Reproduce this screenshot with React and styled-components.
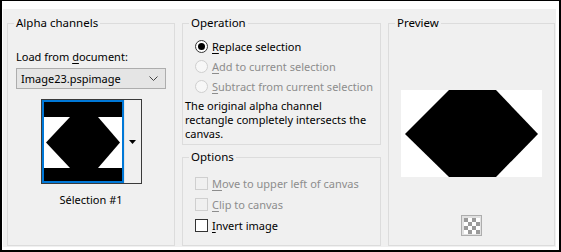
import React from 'react';
import styled, { createGlobalStyle } from 'styled-components';

const GlobalStyle = createGlobalStyle`
  html, body { margin: 0; padding: 0; background: #fff; }
  body {
    font-family: "Noto Sans", "Open Sans", sans-serif;
    font-size: 11px;
    color: #000;
  }
`;

const Frame = styled.div`
  width: 561px;
  height: 252px;
  box-sizing: border-box;
  border: 2px solid #000;
  border-top-width: 1px;
  padding: 8px 3px 3px 1px;
  background: #fff;
`;

const Panel = styled.div`
  height: 100%;
  box-sizing: border-box;
  background: #f0f0f0;
  display: grid;
  grid-template-columns: 168px 199px 167px;
  column-gap: 7px;
  padding: 7px 0 1px 4px;
`;

const Column = styled.div`
  display: flex;
  flex-direction: column;
  gap: 5px;
  min-height: 0;
`;

const Group = styled.fieldset`
  margin: 0;
  padding: 0 8px;
  border: 1px solid #dcdcdc;
  min-width: 0;
  box-sizing: border-box;
  height: ${({ $h }) => ($h ? `${$h}px` : 'auto')};
  flex: ${({ $h }) => ($h ? 'none' : '1')};
`;

const Legend = styled.legend`
  padding: 0 2px;
  margin-left: -2px;
  line-height: 14px;
  font-size: 11.5px;
`;

const Body = styled.div`
  display: flex;
  flex-direction: column;
  align-items: ${({ $center }) => ($center ? 'center' : 'stretch')};
`;

const Label = styled.div`
  line-height: 16px;
  margin-top: ${({ $mt }) => $mt || 0}px;
  white-space: nowrap;
`;

const U = styled.span`
  text-decoration: underline;
  text-underline-offset: 2px;
`;

const Select = styled.div`
  margin-top: 3px;
  width: 150px;
  height: 21px;
  box-sizing: border-box;
  border: 1px solid #adadad;
  background: #e5e5e5;
  display: flex;
  align-items: center;
  justify-content: space-between;
  padding: 0 7px 0 4px;
`;

const Picker = styled.div`
  margin-top: 10px;
  align-self: center;
  width: 101px;
  height: 85px;
  box-sizing: border-box;
  border: 1px solid #3a3a3a;
  background: #fff;
  display: flex;
`;

const Thumb = styled.div`
  width: 82px;
  height: 83px;
  box-sizing: border-box;
  border: 2px solid #0078d7;
  display: flex;
`;

const DropButton = styled.div`
  flex: 1;
  background: #f0f0f0;
  border-left: 1px solid #e3e3e3;
  display: flex;
  align-items: center;
  justify-content: center;
`;

const Caption = styled.div`
  align-self: center;
  margin-top: 8px;
  line-height: 16px;
`;

const OptionRow = styled.div`
  display: flex;
  align-items: center;
  height: ${({ $h }) => $h}px;
  margin-left: 4px;
  color: ${({ $disabled }) => ($disabled ? '#8d8d8d' : '#000')};
  white-space: nowrap;
`;

const RadioCircle = styled.span`
  flex: none;
  width: 13px;
  height: 13px;
  box-sizing: border-box;
  border-radius: 50%;
  border: 1px solid ${({ $disabled }) => ($disabled ? '#cfcfcf' : '#333')};
  background: ${({ $disabled }) => ($disabled ? '#f7f7f7' : '#fff')};
  margin-right: 4px;
  display: flex;
  align-items: center;
  justify-content: center;
  &::after {
    content: '';
    display: ${({ $checked }) => ($checked ? 'block' : 'none')};
    width: 7px;
    height: 7px;
    border-radius: 50%;
    background: #000;
  }
`;

const CheckBox = styled.span`
  flex: none;
  width: 13px;
  height: 13px;
  box-sizing: border-box;
  border: 1px solid ${({ $disabled }) => ($disabled ? '#cfcfcf' : '#333')};
  background: ${({ $disabled }) => ($disabled ? '#f0f0f0' : '#fff')};
  margin-right: 4px;
`;

const Description = styled.div`
  margin: 3px 0 0 -6px;
  line-height: 14px;
  white-space: nowrap;
`;

const CheckList = styled.div`
  margin-top: 9px;
`;

const Canvas = styled.div`
  margin-top: 60px;
  width: 141px;
  height: 87px;
  background: #fff;
`;

const TransparencyButton = styled.div`
  margin-top: 38px;
  width: 21px;
  height: 21px;
  box-sizing: border-box;
  border: 1px solid #adadad;
  background: #e1e1e1;
  display: flex;
  align-items: center;
  justify-content: center;
`;

const Radio = ({ checked, disabled, children }) => (
  <OptionRow $h={20} $disabled={disabled}>
    <RadioCircle $checked={checked} $disabled={disabled} />
    <span>{children}</span>
  </OptionRow>
);

const Check = ({ disabled, children }) => (
  <OptionRow $h={21} $disabled={disabled}>
    <CheckBox $disabled={disabled} />
    <span>{children}</span>
  </OptionRow>
);

const Checker = () => (
  <svg width="16" height="16" viewBox="0 0 16 16">
    <rect width="16" height="16" fill="#fff" />
    {[0, 1, 2, 3].map((r) =>
      [0, 1, 2, 3].map((c) =>
        (r + c) % 2 === 0 ? (
          <rect key={`${r}-${c}`} x={c * 4} y={r * 4} width="4" height="4" fill="#9a9a9a" />
        ) : null
      )
    )}
  </svg>
);

export default function App() {
  return (
    <>
      <GlobalStyle />
      <Frame>
        <Panel>
          <Group>
            <Legend>Alpha channels</Legend>
            <Body>
              <Label $mt={19}>
                Load from <U>d</U>ocument:
              </Label>
              <Select>
                <span>Image23.pspimage</span>
                <svg width="9" height="5" viewBox="0 0 9 5">
                  <path d="M0.5 0.5 L4.5 4.5 L8.5 0.5" fill="none" stroke="#444" strokeWidth="1" />
                </svg>
              </Select>
              <Picker>
                <Thumb>
                  <svg width="78" height="79" viewBox="0 0 78 79">
                    <rect width="78" height="79" fill="#000" />
                    <rect y="15" width="78" height="51" fill="#fff" />
                    <polygon points="26,15 54,15 76,40.5 54,66 26,66 2,40.5" fill="#000" />
                  </svg>
                </Thumb>
                <DropButton>
                  <svg width="7" height="4" viewBox="0 0 7 4">
                    <path d="M0 0 H7 L3.5 4 Z" fill="#000" />
                  </svg>
                </DropButton>
              </Picker>
              <Caption>Sélection #1</Caption>
            </Body>
          </Group>

          <Column>
            <Group $h={129}>
              <Legend>Operation</Legend>
              <Body>
                <div style={{ height: 6 }} />
                <Radio checked>
                  <U>R</U>eplace selection
                </Radio>
                <Radio disabled>
                  <U>A</U>dd to current selection
                </Radio>
                <Radio disabled>
                  <U>S</U>ubtract from current selection
                </Radio>
                <Description>
                  The original alpha channel
                  <br />
                  rectangle completely intersects the
                  <br />
                  canvas.
                </Description>
              </Body>
            </Group>
            <Group>
              <Legend>Options</Legend>
              <CheckList>
                <Check disabled>
                  <U>M</U>ove to upper left of canvas
                </Check>
                <Check disabled>
                  <U>C</U>lip to canvas
                </Check>
                <Check>
                  <U>I</U>nvert image
                </Check>
              </CheckList>
            </Group>
          </Column>

          <Group>
            <Legend>Preview</Legend>
            <Body $center>
              <Canvas>
                <svg width="141" height="87" viewBox="0 0 141 87">
                  <polygon points="48,0 95,0 137,44 95,87 48,87 4,44" fill="#000" />
                </svg>
              </Canvas>
              <TransparencyButton>
                <Checker />
              </TransparencyButton>
            </Body>
          </Group>
        </Panel>
      </Frame>
    </>
  );
}
